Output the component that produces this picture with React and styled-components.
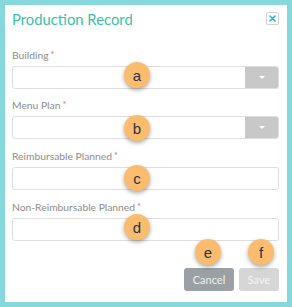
import React from "react";
import styled, { createGlobalStyle } from "styled-components";

const Global = createGlobalStyle`
  html, body { margin: 0; padding: 0; }
  body { background: #87d8dc; font-family: Lato, "Open Sans", sans-serif; }
  * { box-sizing: border-box; }
`;

const Frame = styled.div`
  position: relative;
  width: 292px;
  height: 307px;
  padding: 5px;
  background: #87d8dc;
`;

const Panel = styled.div`
  background: #fff;
  height: 297px;
  padding: 4px 8px 0 7px;
  display: flex;
  flex-direction: column;
`;

const Header = styled.div`
  display: flex;
  align-items: flex-start;
  justify-content: space-between;
  height: 20px;
`;

const Title = styled.h1`
  margin: 0;
  font-family: Lato, sans-serif;
  font-weight: 400;
  font-size: 14.8px;
  line-height: 20px;
  color: #3bbfa6;
`;

const Close = styled.button`
  width: 13px;
  height: 13px;
  margin-top: 3px;
  padding: 0;
  border: 1px solid #cfd3d6;
  border-radius: 2px;
  background: #fff;
  display: flex;
  align-items: center;
  justify-content: center;
`;

const Group = styled.div`
  display: flex;
  flex-direction: column;
  margin-top: ${(p) => p.$top}px;
`;

const Label = styled.label`
  font-family: Lato, sans-serif;
  font-size: 10.3px;
  line-height: 14px;
  color: #8c8c8c;
  margin-bottom: 4px;
`;

const Req = styled.span`
  color: #e26b6b;
  font-size: 9px;
  margin-left: 2px;
  vertical-align: top;
`;

const Field = styled.div`
  display: flex;
  height: 23px;
  border: 1px solid #dedede;
  border-radius: 3px;
  background: #fff;
  overflow: hidden;
`;

const Input = styled.input`
  flex: 1;
  border: none;
  outline: none;
  background: transparent;
  min-width: 0;
`;

const Caret = styled.div`
  width: 33px;
  background: #c8c8c8;
  display: flex;
  align-items: center;
  justify-content: center;
  &::after {
    content: "";
    border-left: 3px solid transparent;
    border-right: 3px solid transparent;
    border-top: 3px solid #fff;
  }
`;

const Actions = styled.div`
  display: flex;
  justify-content: flex-end;
  gap: 5px;
  margin-top: 27px;
`;

const Button = styled.button`
  height: 23px;
  width: ${(p) => p.$w}px;
  border: none;
  border-radius: 3px;
  background: ${(p) => p.$bg};
  color: ${(p) => p.$fg};
  font-family: Lato, sans-serif;
  font-size: 11px;
  padding: 0;
`;

const Badge = styled.div`
  position: absolute;
  width: 26px;
  height: 26px;
  border-radius: 50%;
  background: #fbbd6d;
  box-shadow: 0 2px 4px rgba(0, 0, 0, 0.35);
  color: #27324c;
  font-family: "Liberation Sans", Arial, sans-serif;
  font-size: 15px;
  display: flex;
  align-items: center;
  justify-content: center;
  left: ${(p) => p.$x - 13}px;
  top: ${(p) => p.$y - 13}px;
`;

const fields = [
  { label: "Building", select: true, top: 19 },
  { label: "Menu Plan", select: true, top: 9 },
  { label: "Reimbursable Planned", select: false, top: 10 },
  { label: "Non-Reimbursable Planned", select: false, top: 10 },
];

const badges = [
  ["a", 137, 75],
  ["b", 137, 128],
  ["c", 137, 178],
  ["d", 137, 227],
  ["e", 208, 252],
  ["f", 261, 252],
];

export default function App() {
  return (
    <>
      <Global />
      <Frame>
        <Panel>
          <Header>
            <Title>Production Record</Title>
            <Close aria-label="close">
              <svg width="7" height="7" viewBox="0 0 7 7">
                <path d="M1 1L6 6M6 1L1 6" stroke="#27b3e3" strokeWidth="1.6" strokeLinecap="round" />
              </svg>
            </Close>
          </Header>
          {fields.map((f) => (
            <Group key={f.label} $top={f.top}>
              <Label>
                {f.label}
                <Req>*</Req>
              </Label>
              <Field>
                <Input />
                {f.select && <Caret />}
              </Field>
            </Group>
          ))}
          <Actions>
            <Button $w={50} $bg="#9aa0a4" $fg="#eef0f1">Cancel</Button>
            <Button $w={40} $bg="#d6d6d6" $fg="#f4f4f4">Save</Button>
          </Actions>
        </Panel>
        {badges.map(([l, x, y]) => (
          <Badge key={l} $x={x} $y={y}>{l}</Badge>
        ))}
      </Frame>
    </>
  );
}
